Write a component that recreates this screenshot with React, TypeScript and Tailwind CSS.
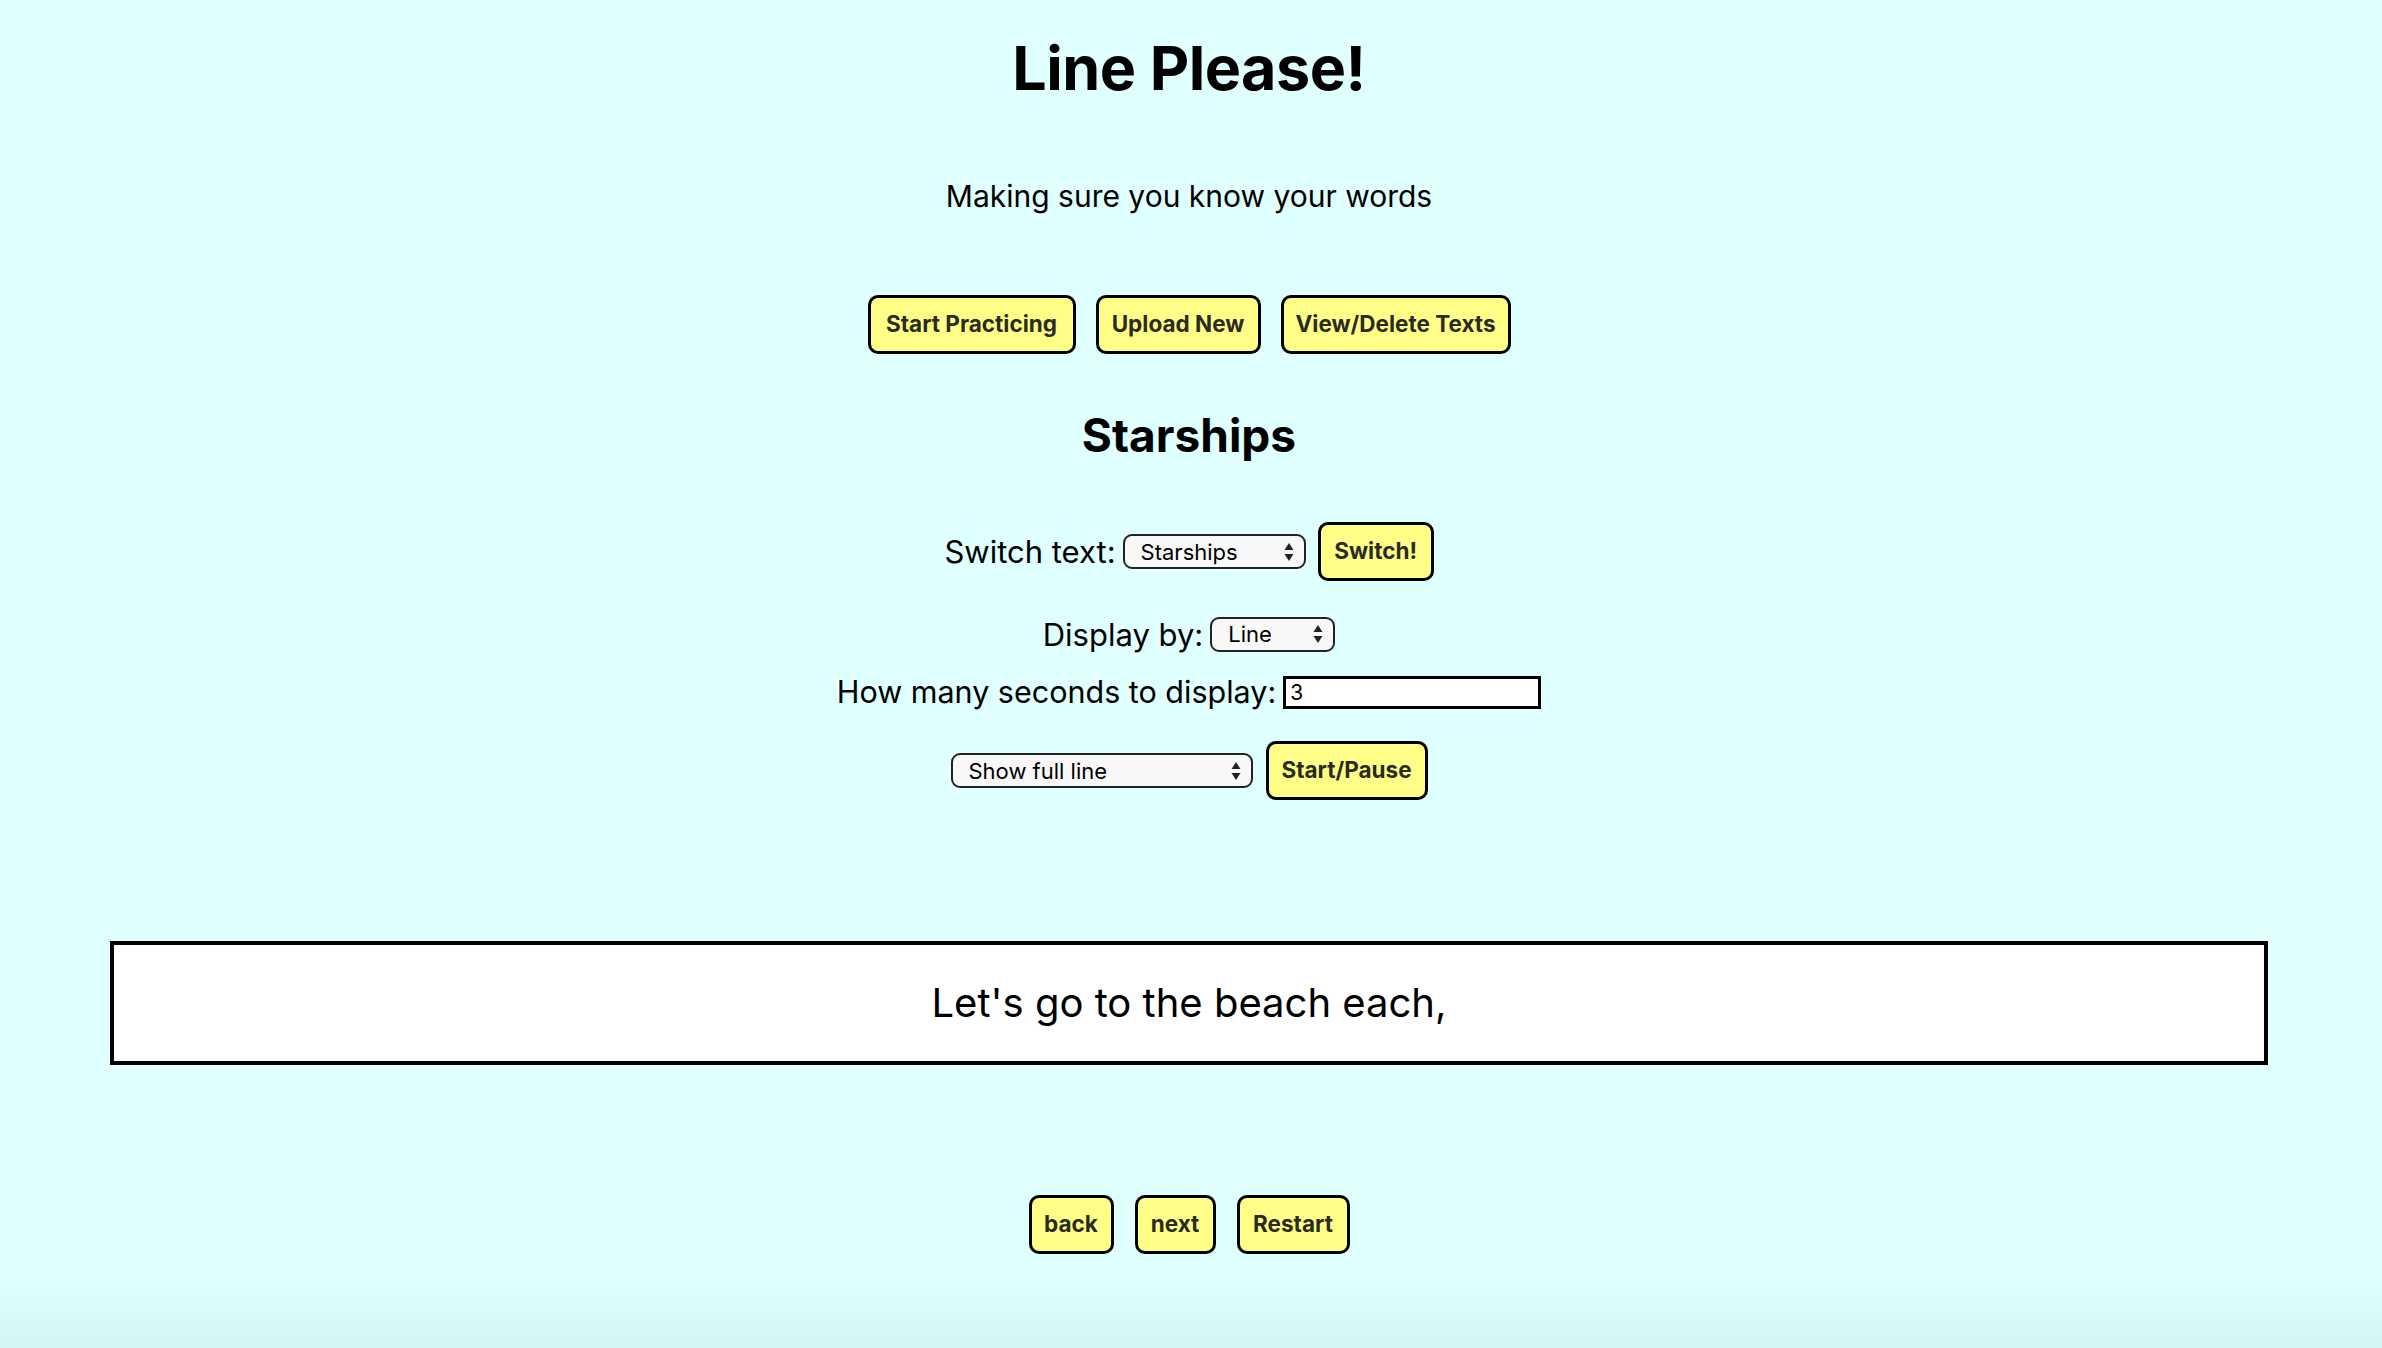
import React from "react";

const font = { fontFamily: "Inter, 'Noto Sans', sans-serif" };

function YellowButton({ children, className = "" }: any) {
  return (
    <button
      className={`h-[59px] px-[6px] whitespace-nowrap rounded-[10px] border-[3px] border-black bg-[#ffff88] text-[22.5px] font-bold text-[#2b2b22] leading-none ${className}`}
    >
      {children}
    </button>
  );
}

function FakeSelect({ value, width }: any) {
  return (
    <div
      className={`flex items-center justify-between h-[35px] rounded-[9px] border-[2px] border-[#222] bg-[#f8f8f8] pl-[16px] pr-[10px] text-[22px] text-black ${width}`}
    >
      <span className="leading-none">{value}</span>
      <svg width="10" height="20" viewBox="0 0 10 20">
        <polygon points="5,1 9.5,8 0.5,8" fill="#222" />
        <polygon points="5,19 9.5,12 0.5,12" fill="#222" />
      </svg>
    </div>
  );
}

export default function App() {
  return (
    <div
      style={font}
      className="min-h-[1348px] w-full flex flex-col items-center text-black bg-[linear-gradient(to_bottom,#e0ffff_calc(100%-70px),#d5f4f4_100%)] pt-[38px] pr-[4px]"
    >
      <h1 className="text-[61px] font-bold leading-none tracking-[-0.5px]">Line Please!</h1>
      <p className="mt-[82px] text-[30px] leading-none">Making sure you know your words</p>

      <div className="mt-[84px] flex gap-[20px]">
        <YellowButton className="w-[208px]">Start Practicing</YellowButton>
        <YellowButton className="w-[165px]">Upload New</YellowButton>
        <YellowButton className="w-[230px]">View/Delete Texts</YellowButton>
      </div>

      <h2 className="mt-[58px] text-[46px] font-bold leading-none">Starships</h2>

      <div className="mt-[64px] flex items-center">
        <span className="text-[31px] leading-none">Switch text:</span>
        <div className="ml-[7px]">
          <FakeSelect value="Starships" width="w-[183px]" />
        </div>
        <YellowButton className="ml-[12px] w-[116px] h-[58px]">Switch!</YellowButton>
      </div>

      <div className="mt-[36px] flex items-center h-[34px]">
        <span className="text-[31px] leading-none">Display by:</span>
        <div className="ml-[7px]">
          <FakeSelect value="Line" width="w-[125px]" />
        </div>
      </div>

      <div className="mt-[25px] flex items-center h-[33px]">
        <span className="text-[30.5px] leading-none">How many seconds to display:</span>
        <div className="ml-[7px] w-[258px] h-[33px] border-[3px] border-black bg-white flex items-center px-[4px] text-[21px] leading-none">
          3
        </div>
      </div>

      <div className="mt-[32px] flex items-center">
        <FakeSelect value="Show full line" width="w-[302px]" />
        <YellowButton className="ml-[13px] w-[162px] h-[58px]">Start/Pause</YellowButton>
      </div>

      <div className="mt-[141px] w-[2158px] h-[124px] border-[4px] border-black bg-white flex items-center justify-center">
        <span className="text-[40px] leading-none">Let's go to the beach each,</span>
      </div>

      <div className="mt-[130px] flex gap-[21px]">
        <YellowButton className="w-[85px]">back</YellowButton>
        <YellowButton className="w-[81px]">next</YellowButton>
        <YellowButton className="w-[113px]">Restart</YellowButton>
      </div>
    </div>
  );
}
